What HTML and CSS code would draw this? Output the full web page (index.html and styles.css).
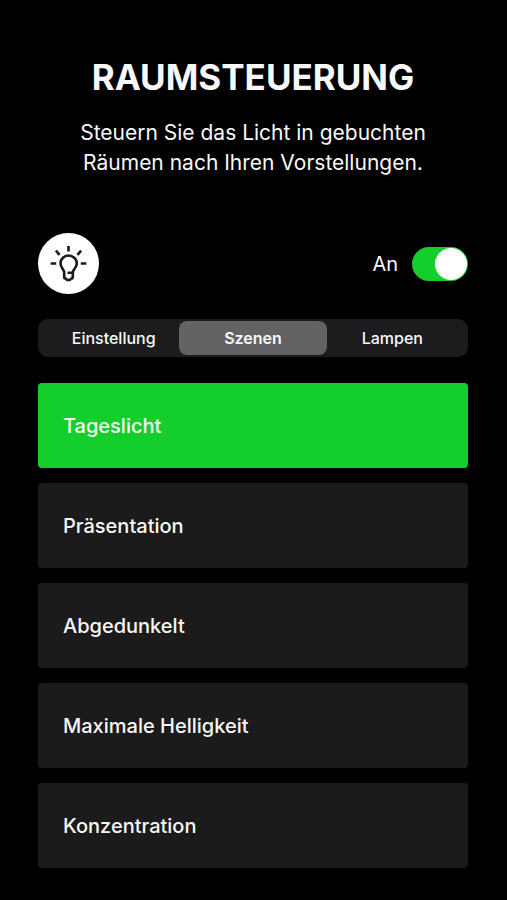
FILE: index.html
```html
<!DOCTYPE html>
<html lang="de">
<head>
<meta charset="utf-8">
<meta name="viewport" content="width=device-width, initial-scale=1">
<title>Raumsteuerung</title>
<link rel="stylesheet" href="styles.css">
</head>
<body>
<main class="page">
  <header class="intro">
    <h1 class="title">RAUMSTEUERUNG</h1>
    <p class="lead">Steuern Sie das Licht in gebuchten Räumen nach Ihren Vorstellungen.</p>
  </header>

  <section class="power">
    <span class="bulb">
      <svg class="bulb-icon" viewBox="28 29 184 184" aria-hidden="true">
        <g fill="none" stroke="#1b1b1b" stroke-width="8">
          <path d="M120 68v17M82 82l11 13M158 82l-11 13M66 121h17M157 121h17"/>
          <path stroke-linejoin="round" d="M117 149H133V162C133 166 130 167 127 167C126 172 114 172 113 167C110 167 107 166 107 162V149C107 138 96 135 96 120C96 107 107 97 120 97C133 97 145 107 145 120C145 135 133 138 133 149"/>
        </g>
      </svg>
    </span>
    <label class="switch">
      <span class="switch-text">An</span>
      <input class="switch-input" type="checkbox" role="switch" checked>
    </label>
  </section>

  <nav class="tabs">
    <button class="tab" type="button">Einstellung</button>
    <button class="tab tab-active" type="button" aria-current="true">Szenen</button>
    <button class="tab" type="button">Lampen</button>
  </nav>

  <section class="scenes">
    <button class="scene scene-active" type="button" aria-pressed="true">Tageslicht</button>
    <button class="scene" type="button">Präsentation</button>
    <button class="scene" type="button">Abgedunkelt</button>
    <button class="scene" type="button">Maximale Helligkeit</button>
    <button class="scene" type="button">Konzentration</button>
  </section>
</main>
</body>
</html>
```
FILE: styles.css
```css
* {
  box-sizing: border-box;
}

body {
  margin: 0;
  background: #000;
  color: #f8f8f8;
  font-family: Inter, "Liberation Sans", sans-serif;
}

button {
  border: 0;
  color: inherit;
  font-family: inherit;
  cursor: pointer;
}

.page {
  padding: 55px 39px 32px 38px;
}

.intro {
  text-align: center;
}

.title {
  margin: 0;
  font-size: 35px;
  line-height: 44px;
  font-weight: 700;
}

.lead {
  max-width: 380px;
  margin: 19px auto 0;
  font-size: 21px;
  line-height: 30px;
  font-weight: 400;
}

.power {
  display: flex;
  align-items: center;
  justify-content: space-between;
  margin-top: 55px;
}

.bulb {
  width: 61px;
  height: 61px;
  border-radius: 50%;
  background: #fff;
}

.bulb-icon {
  display: block;
  width: 100%;
  height: 100%;
}

.switch {
  display: flex;
  align-items: center;
  gap: 14px;
}

.switch-text {
  font-size: 20px;
  line-height: 24px;
}

.switch-input {
  display: flex;
  justify-content: flex-end;
  appearance: none;
  width: 56px;
  height: 34px;
  margin: 0;
  padding: 1px;
  border-radius: 17px;
  background: #3a3a3c;
}

.switch-input::before {
  content: "";
  width: 32px;
  height: 32px;
  border-radius: 50%;
  background: #fff;
}

.switch-input:checked {
  background: #14cf2b;
}

.switch-input:not(:checked) {
  justify-content: flex-start;
}

.tabs {
  display: grid;
  grid-template-columns: 131fr 147fr 131fr;
  height: 38px;
  margin-top: 25px;
  padding: 2px 10px;
  border-radius: 10px;
  background: #1c1c1e;
}

.tab {
  padding: 0;
  border-radius: 8px;
  background: transparent;
  font-size: 16px;
  font-weight: 500;
}

.tab-active {
  background: #636366;
  font-weight: 600;
}

.scenes {
  display: grid;
  gap: 15px;
  margin-top: 26px;
}

.scene {
  height: 85px;
  padding: 0 25px;
  border-radius: 4px;
  background: #1b1b1b;
  font-size: 20px;
  font-weight: 500;
  text-align: left;
}

.scene-active {
  background: #14cf2b;
}
```
